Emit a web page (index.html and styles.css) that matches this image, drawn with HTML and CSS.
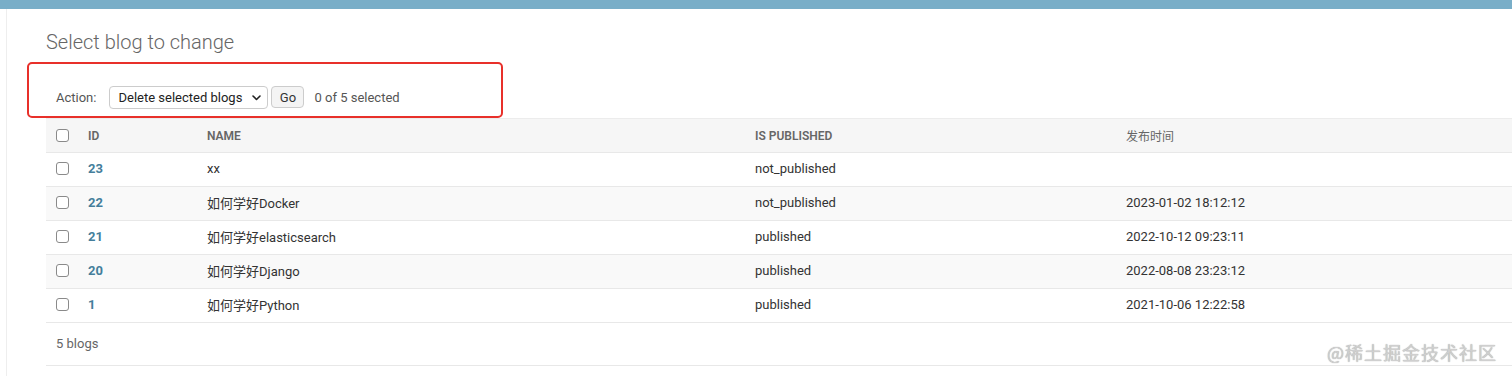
FILE: index.html
```html
<!DOCTYPE html>
<html lang="en">
<head>
  <meta charset="UTF-8">
  <title>Select blog to change</title>
  <link rel="stylesheet" href="styles.css">
</head>
<body>
  <div class="topbar"></div>

  <div class="main">
    <div class="content">
      <h1>Select blog to change</h1>

      <div class="actions">
        <label class="action-label">Action:</label>
        <div class="select">Delete selected blogs
          <svg class="chevron" width="9" height="6" viewBox="0 0 9 6"><path d="M1 1l3.5 3.5L8 1" fill="none" stroke="#222" stroke-width="1.6" stroke-linecap="round" stroke-linejoin="round"/></svg>
        </div>
        <button class="go-button">Go</button>
        <span class="action-counter">0 of 5 selected</span>
      </div>

      <table class="result-list">
        <colgroup>
          <col class="col-check">
          <col class="col-id">
          <col class="col-name">
          <col class="col-pub">
          <col class="col-date">
        </colgroup>
        <thead>
          <tr>
            <th><span class="checkbox"></span></th>
            <th>ID</th>
            <th>Name</th>
            <th>Is published</th>
            <th class="cjk">发布时间</th>
          </tr>
        </thead>
        <tbody>
          <tr>
            <td><span class="checkbox"></span></td>
            <td><a class="id-link">23</a></td>
            <td>xx</td>
            <td>not_published</td>
            <td></td>
          </tr>
          <tr>
            <td><span class="checkbox"></span></td>
            <td><a class="id-link">22</a></td>
            <td>如何学好Docker</td>
            <td>not_published</td>
            <td>2023-01-02 18:12:12</td>
          </tr>
          <tr>
            <td><span class="checkbox"></span></td>
            <td><a class="id-link">21</a></td>
            <td>如何学好elasticsearch</td>
            <td>published</td>
            <td>2022-10-12 09:23:11</td>
          </tr>
          <tr>
            <td><span class="checkbox"></span></td>
            <td><a class="id-link">20</a></td>
            <td>如何学好Django</td>
            <td>published</td>
            <td>2022-08-08 23:23:12</td>
          </tr>
          <tr>
            <td><span class="checkbox"></span></td>
            <td><a class="id-link">1</a></td>
            <td>如何学好Python</td>
            <td>published</td>
            <td>2021-10-06 12:22:58</td>
          </tr>
        </tbody>
      </table>

      <p class="paginator">5 blogs</p>
    </div>
  </div>

  <div class="watermark">@稀土掘金技术社区</div>
</body>
</html>
```

FILE: styles.css
```css
* {
  margin: 0;
  padding: 0;
  box-sizing: border-box;
}

body {
  font-family: Roboto, 'Noto Sans CJK SC', sans-serif;
  font-size: 13px;
  color: #333;
  background: #fff;
  width: 1512px;
  height: 376px;
  overflow: hidden;
  position: relative;
}

.topbar {
  height: 9px;
  background: #79aec8;
}

.main {
  margin-left: 6px;
  border-left: 1px solid #eee;
  padding-left: 39px;
  height: 367px;
}

.content {
  padding-top: 21px;
}

h1 {
  font-size: 20px;
  font-weight: 300;
  line-height: 24px;
  color: #666;
  margin-bottom: 8px;
}

/* actions bar (marked with a red frame in the screenshot) */
.actions {
  display: flex;
  align-items: center;
  margin-left: -19px;
  width: 476px;
  height: 56px;
  border: 2px solid #e8302a;
  border-radius: 5px;
  padding: 14px 0 0 27px;
  color: #555;
}

.action-label {
  margin-right: 13px;
}

.select {
  position: relative;
  width: 159px;
  height: 23px;
  line-height: 21px;
  border: 1px solid #ccc;
  border-radius: 4px;
  padding-left: 8px;
  color: #222;
  background: #fff;
}

.chevron {
  position: absolute;
  right: 6px;
  top: 8px;
}

.go-button {
  margin-left: 3px;
  width: 33px;
  height: 22px;
  border: 1px solid #ccc;
  border-radius: 4px;
  background: #f4f4f4;
  font-family: inherit;
  font-size: 13px;
  color: #333;
}

.action-counter {
  margin-left: 10px;
  color: #555;
}

/* result table */
.result-list {
  width: 1466px;
  table-layout: fixed;
  border-collapse: collapse;
}

.col-check { width: 34px; }
.col-id { width: 119px; }
.col-name { width: 548px; }
.col-pub { width: 371px; }
.col-date { width: 394px; }

.result-list th {
  height: 34px;
  padding-left: 8px;
  text-align: left;
  font-size: 12px;
  font-weight: 600;
  text-transform: uppercase;
  color: #666;
  background: #f6f6f6;
  border-top: 1px solid #ececec;
  border-bottom: 1px solid #e8e8e8;
}

.result-list th.cjk {
  font-weight: 400;
}

.result-list td {
  height: 34px;
  padding-left: 8px;
  padding-bottom: 2px;
  border-bottom: 1px solid #e8e8e8;
  vertical-align: middle;
}

.result-list tbody tr:nth-child(even) {
  background: #f9f9f9;
}

.result-list th:first-child,
.result-list td:first-child {
  padding-left: 10px;
}

.checkbox {
  display: block;
  width: 13px;
  height: 13px;
  border: 1px solid #8a8a8a;
  border-radius: 3px;
  background: #fff;
}

.id-link {
  font-weight: 700;
  color: #447e9b;
}

.paginator {
  height: 43px;
  line-height: 42px;
  padding-left: 10px;
  color: #666;
  border-bottom: 1px solid #e8e8e8;
}

.watermark {
  position: absolute;
  right: 15px;
  top: 339px;
  font-family: 'Noto Sans CJK SC', sans-serif;
  font-size: 18px;
  letter-spacing: 1px;
  color: #cfcfcf;
  text-shadow: 0 0 1px #999;
}
```
